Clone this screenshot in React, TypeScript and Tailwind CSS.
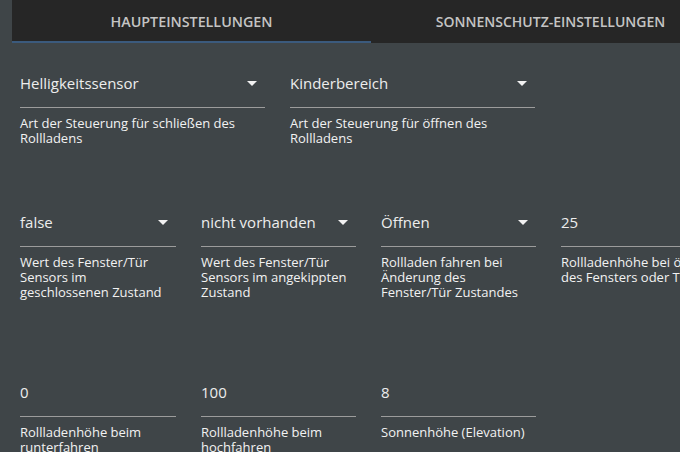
import React from 'react';

const font = { fontFamily: '"Open Sans", "Noto Sans", sans-serif' };

interface FieldProps {
  value: string;
  label: string;
  select?: boolean;
  width: string;
}

const Arrow = () => (
  <svg width="10" height="5" viewBox="0 0 10 5" className="mr-2 mt-[1px] shrink-0">
    <path d="M0 0 L10 0 L5 5 Z" fill="#f2f2f2" />
  </svg>
);

const Field: React.FC<FieldProps> = ({ value, label, select, width }) => (
  <div className={`${width} shrink-0`}>
    <div className="h-[35px] border-b border-[#9c9c9c] flex items-start justify-between">
      <span className="text-[15px] leading-[20px] text-[#ededed]">{value}</span>
      {select && <div className="h-[20px] flex items-center"><Arrow /></div>}
    </div>
    <p className="mt-[8px] text-[13px] leading-[15px] text-[#f2f2f2] pr-2">{label}</p>
  </div>
);

export default function App() {
  return (
    <div className="w-[680px] h-[452px] overflow-hidden bg-[#3f4548]" style={font}>
      {/* Tabs */}
      <div className="ml-3 flex h-[43px] w-[720px] bg-[#262626]">
        <div className="w-[359px] flex items-center justify-center border-b-2 border-[#3b5a7d] pt-[2px]">
          <span className="text-[14.3px] font-semibold text-[#c4c4c4]">HAUPTEINSTELLUNGEN</span>
        </div>
        <div className="w-[359px] flex items-center justify-center">
          <span className="text-[14px] font-semibold text-[#c4c4c4]">SONNENSCHUTZ-EINSTELLUNGEN</span>
        </div>
      </div>

      <div className="px-5">
        <div className="mt-[30px] flex gap-[25px]">
          <Field width="w-[245px]" select value="Helligkeitssensor" label="Art der Steuerung für schließen des Rollladens" />
          <Field width="w-[245px]" select value="Kinderbereich" label="Art der Steuerung für öffnen des Rollladens" />
        </div>

        <div className="mt-[66px] flex gap-[25px] w-[850px]">
          <Field width="w-[156px]" select value="false" label="Wert des Fenster/Tür Sensors im geschlossenen Zustand" />
          <Field width="w-[155px]" select value="nicht vorhanden" label="Wert des Fenster/Tür Sensors im angekippten Zustand" />
          <Field width="w-[155px]" select value="Öffnen" label="Rollladen fahren bei Änderung des Fenster/Tür Zustandes" />
          <Field width="w-[175px]" value="25" label="Rollladenhöhe bei öffnen des Fensters oder Türe" />
        </div>

        <div className="mt-[82px] flex gap-[25px]">
          <Field width="w-[156px]" value="0" label="Rollladenhöhe beim runterfahren" />
          <Field width="w-[155px]" value="100" label="Rollladenhöhe beim hochfahren" />
          <Field width="w-[155px]" value="8" label="Sonnenhöhe (Elevation)" />
        </div>
      </div>
    </div>
  );
}
